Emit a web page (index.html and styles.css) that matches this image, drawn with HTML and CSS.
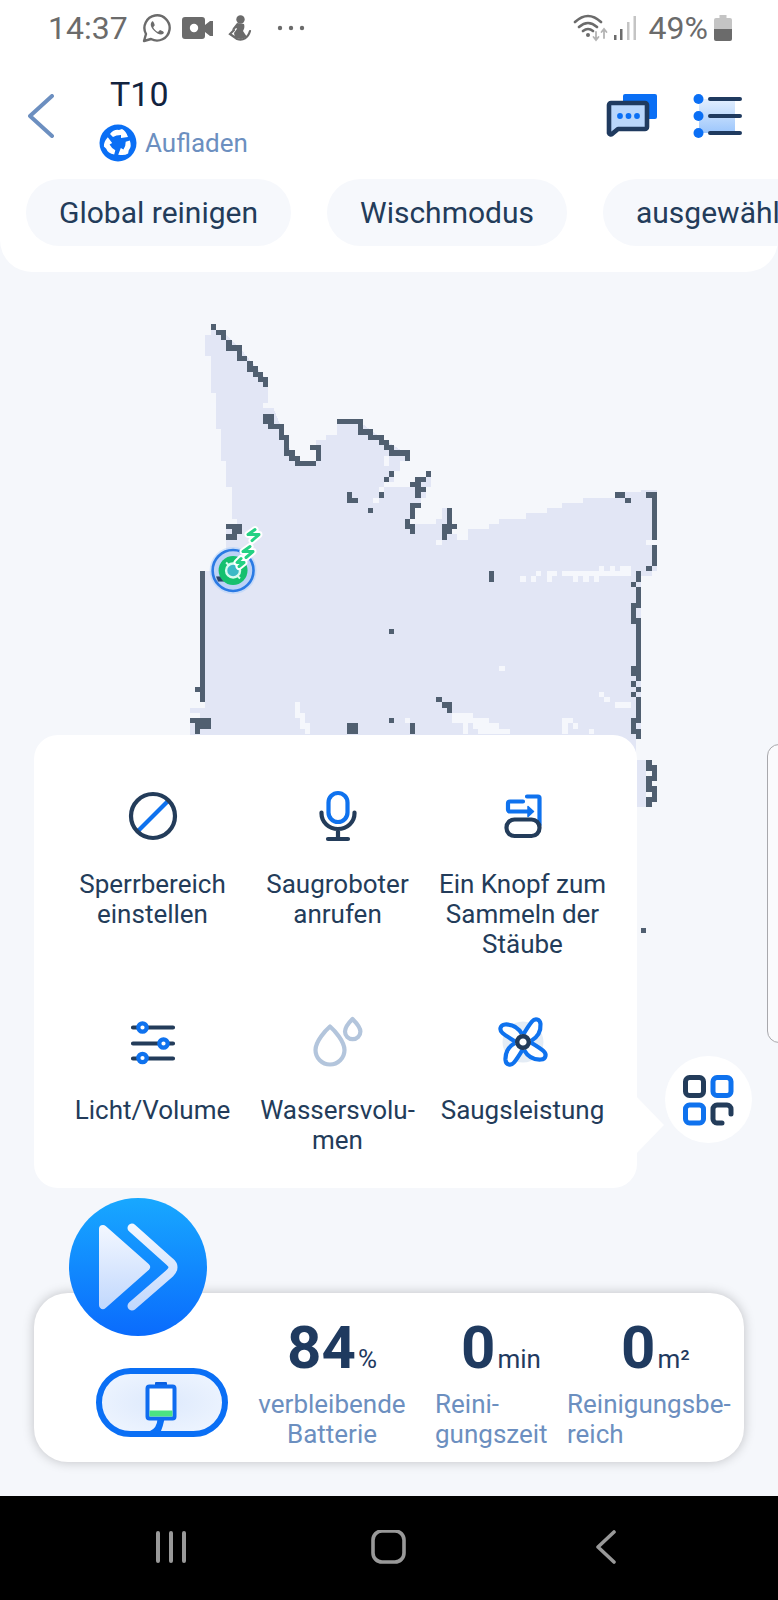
FILE: index.html
```html
<!DOCTYPE html>
<html lang="de">
  <head>
    <meta charset="UTF-8" />
    <meta name="viewport" content="width=device-width, initial-scale=1.0" />
    <title>T10</title>
    <link rel="stylesheet" href="styles.css">
  </head>
  <body>
    <header class="header">
      <div class="status">
        <span class="status-time">14:37</span>
        <svg class="status-wa" width="30" height="30" viewBox="0 0 30 30" fill="none" stroke="#6b6b6b" stroke-width="2.4">
          <path d="M2 28l2-7A12.6 12.6 0 1 1 9 26z" stroke-linejoin="round" />
          <path d="M10 8.500c-3 3 0 7 2.500 9.500s6.500 5 9 2.500c1-1.500 0-2-3.500-3.500l-2 2c-2-.8-4-3-4.800-4.800l1.600-2c-1-3-1.800-4.500-2.800-3.700z" fill="#6b6b6b" stroke="none" />
        </svg>
        <svg class="status-cam" width="32" height="24" viewBox="0 0 32 24">
          <path d="M3 1h17a3 3 0 0 1 3 3v5l5-4h3v15h-3l-5-4v4a3 3 0 0 1-3 3H3a3 3 0 0 1-3-3V4a3 3 0 0 1 3-3z" fill="#6b6b6b" />
          <circle cx="12" cy="12" r="4.200" fill="#fff" />
        </svg>
        <svg class="status-fig" width="24" height="26" viewBox="0 0 24 26" fill="#6b6b6b">
          <circle cx="12.500" cy="4.500" r="4.200" />
          <path d="M9 8l7 1c1 3 0 5-1 7l4 6-6 2-6-1-1-5c1-2 3-3 3-5l-5 2 1-2z" />
          <path d="M6 15l-4 4 7 5c6 2 11-1 13-8" fill="none" stroke="#6b6b6b" stroke-width="2.200" stroke-linecap="round" />
        </svg>
        <svg width="28" height="6" viewBox="0 0 28 6" fill="#6b6b6b">
          <circle cx="3" cy="3" r="2.200" /><circle cx="14" cy="3" r="2.200" /><circle cx="25" cy="3" r="2.200" />
        </svg>
        <span class="spacer"></span>
        <svg class="status-wifi" width="36" height="28" viewBox="0 0 36 28" fill="none" stroke="#6b6b6b" stroke-width="2.600" stroke-linecap="round">
          <path d="M2 8q13-12 26 0M6 13q9-8 18 0M10 17q5-4 10 0" />
          <circle cx="15" cy="21" r="2" fill="#6b6b6b" stroke="none" />
          <path d="M23 18v7M20.500 23l2.500 3 2.500-3M31 24v-8M28.500 18l2.500-3 2.500 3" stroke="#b4b4b4" stroke-width="1.800" />
        </svg>
        <svg class="status-signal" width="24" height="26" viewBox="0 0 24 26">
          <path d="M1 20h2.500v5H1zM7 14h2.500v11H7z" fill="#6b6b6b" />
          <path d="M14 7h2.500v18H14zM20.500 1H23v24h-2.500z" fill="#c4c4c4" />
        </svg>
        <span class="status-percent">49%</span>
        <svg width="19" height="28" viewBox="0 0 19 28">
          <path d="M5.500 1h7v3H16a2 2 0 0 1 2 2v10H0V6a2 2 0 0 1 2-2h3.500z" fill="#c4c4c4" />
          <path d="M0 15h18v10a2 2 0 0 1-2 2H2a2 2 0 0 1-2-2z" fill="#6b6b6b" />
        </svg>
      </div>

      <div class="titlebar">
        <button class="icon-button" aria-label="Zurück">
          <svg width="28" height="44" viewBox="0 0 28 44" fill="none" stroke="#6c8fc0" stroke-width="4" stroke-linecap="round" stroke-linejoin="round">
            <path d="M24 2L2 22l22 20" />
          </svg>
        </button>
        <div class="device">
          <h1>T10</h1>
          <p class="device-state">
            <svg width="38" height="38" viewBox="-19 -19 38 38">
              <circle r="18.500" fill="#0a6ff5" />
              <g fill="#fff">
                <path id="arr" d="M-8-9Q-4-14 1-13L4-14Q8-12 10-6L3-5 3-8Q-2-8-5-6z" />
                <use href="#arr" transform="rotate(120)" />
                <use href="#arr" transform="rotate(240)" />
              </g>
            </svg>
            Aufladen
          </p>
        </div>
        <button class="icon-button" aria-label="Nachrichten">
          <svg width="52" height="46" viewBox="0 0 52 46">
            <rect x="17" y="1" width="34" height="25" rx="2" fill="#0a6ff5" />
            <path d="M5 10h34a2 2 0 0 1 2 2v22a2 2 0 0 1-2 2H12l-6 5a2 2 0 0 1-3-1V12a2 2 0 0 1 2-2z" fill="#b9d6fb" stroke="#1f3a5f" stroke-width="4.600" stroke-linejoin="round" />
            <g fill="#0a6ff5"><circle cx="14" cy="23" r="2.900" /><circle cx="22.500" cy="23" r="2.900" /><circle cx="31" cy="23" r="2.900" /></g>
          </svg>
        </button>
        <button class="icon-button" aria-label="Einstellungen">
          <svg width="50" height="46" viewBox="0 0 50 46">
            <defs>
              <linearGradient id="listfill" x2="0" y2="1"><stop offset="0" stop-color="#e3effe" /><stop offset="1" stop-color="#9cc6fc" /></linearGradient>
            </defs>
            <rect x="6" y="6" width="36" height="34" fill="url(#listfill)" />
            <g fill="#0a6ff5"><circle cx="5.500" cy="6" r="5" /><circle cx="5.500" cy="23" r="5" /><circle cx="5.500" cy="40" r="5" /></g>
            <path d="M17 6h30M17 23h30M17 40h30" stroke="#1f3a5f" stroke-width="4" stroke-linecap="round" />
          </svg>
        </button>
      </div>

      <div class="chips">
        <button class="chip">Global reinigen</button>
        <button class="chip">Wischmodus</button>
        <button class="chip">ausgewähl</button>
      </div>
    </header>

    <main class="main">
      <!-- one unit = one map cell -->
      <svg class="map" viewBox="-6 -1 96 120" width="504" height="630" shape-rendering="crispEdges">
        <path fill="#e2e6f5" d="M0 1H2L6 5 11 11V15H10V16H12L14 21 16 26H20V22H22V21H24V19H29L33 22 38 25V26H36V28H35V30H34V31H38V30H39V29H41V28H42V31H41V33H40V35H39V38H43V37H44V35H46V40H49V39H53V38H55V37H60V36H64V35H67V34H71V33H79V32H82V31.500H85V47H84V48H82V79H81V83H83V92H81V98H-4V75H-2V74H-4V73H-1V47H1V44H3V38H5V37H4V31H3V27H2V20H1V13H0V6H-1V2H0z" />
        <path stroke="#f5f7fc" transform="translate(0 .5)" d="M59 48h1M61 48h1M62 47h1M64 47h2M64 48h1M67 47h13M74 46h1M76 46h1M78 46h2M69 48h1M71 48h1M73 48h1M55 65h1M74 70h1M75 71h1M77 72h3M46 74h4M46 75h7M48 76h1M50 76h5M48 77h1M51 77h6M67 75h2M67 76h1M67 77h1M69 76h1M72 77h1M83 41h2M43 41h1M47 40h2M16 72h1M16 73h1M16 74h2M17 75h1M17 76h2M18 77h1M37 75h1M33 25h1M33 26h1M33 30h1M32 31h1M31 33h1M-1 6h1M0 15h1M2 26h1M38 37h1" />
        <path stroke="#505f70" transform="translate(0 .5)" d="M0 0h1M1 1h2M2 2h1M3 3h1M3 4h3M5 5h1M5 6h2M7 7h1M7 8h2M8 9h2M9 10h2M10 11h1M10 17h2M10 18h2M11 19h3M13 20h1M13 21h2M14 24h2M15 25h2M16 26h4M19 23h2M24 18h5M28 20h3M30 21h3M32 22h2M33 23h2M34 24h4M37 25h1M34 28h1M33 29h1M32 32h1M26 32h1M26 33h2M30 35h1M41 28h1M39 29h2M38 30h2M39 31h2M39 32h1M38 34h2M37 37h1M37 38h2M38 39h1M44 38h3M44 39h2M44 40h1M3 38h3M4 39h2M3 40h2M-3 69h1M-4 75h4M-3 76h3M-3 77h1M1 48h2M34 58h1M43 71h1M44 72h2M45 73h1M34 75h1M26 76h2M26 77h2M77 32h2M79 33h1M83 32h2M83 46h1M80 49h1M80 68h1M81 69h1M80 70h1M82 115h1" />
        <path stroke="#505f70" transform="translate(.5 0)" d="M14 22v2M20 24v2M28 19v1M38 35v2M45 35v3M-2 47v25M38 76v2M84 33v8M84 42v4M81 47v2M81 50v4M80 53v4M81 56v12M80 65v2M81 71v5M81 77v2M80 75v3M53 47v2M83 83v2M84 84v3M83 86v3M84 88v3M83 90v2" />
        <!-- robot on its dock -->
        <g transform="translate(4.300 46.900) scale(.19)" shape-rendering="auto">
          <circle r="23.500" fill="#a9cdfb" opacity=".5" />
          <circle r="20.500" fill="#b9cff5" fill-opacity=".8" stroke="#2a7ae4" stroke-width="2.600" />
          <path d="M-17 6h8v5h-6z" fill="#2b4468" />
          <circle r="14.500" fill="#15c06e" />
          <circle r="7" fill="#3bb9c6" stroke="#d9fbef" stroke-width="2.400" />
          <path d="M-7-8l3 3M7 8l-3-3" stroke="#d9fbef" stroke-width="2" />
          <g fill="none" stroke-linecap="round" stroke-linejoin="round">
            <path d="M22-41L15-36 26-36 19-30M17-24L10-19 20-19 13-13M8-12L4-8 11-8 6-4" stroke="#fff" stroke-width="7" />
            <path d="M22-41L15-36 26-36 19-30M17-24L10-19 20-19 13-13M8-12L4-8 11-8 6-4" stroke="#23d183" stroke-width="3" />
          </g>
        </g>
      </svg>

      <div class="edge-handle"></div>

      <div class="tools">
        <div class="popup">
          <button class="tool">
            <svg width="56" height="56" viewBox="-28 -28 56 56" fill="none" stroke-width="4.200">
              <path d="M-15 15L15-15" stroke="#0f72ee" />
              <circle r="22" stroke="#233c5a" />
            </svg>
            <span>Sperrbereich einstellen</span>
          </button>
          <button class="tool">
            <svg width="56" height="56" viewBox="-28 -28 56 56" fill="none" stroke-width="4.200" stroke-linecap="round">
              <rect x="-9.500" y="-23" width="19" height="29" rx="9.500" stroke="#0f72ee" />
              <path d="M-16.500-3.500v1a16.500 15.500 0 0 0 33 0v-1M0 13v9M-10 23h20" stroke="#233c5a" />
            </svg>
            <span>Saugroboter anrufen</span>
          </button>
          <button class="tool">
            <svg width="56" height="56" viewBox="-28 -28 56 56" fill="none" stroke-width="4.200" stroke-linecap="round" stroke-linejoin="round">
              <path d="M4-19.500h11a1.500 1.500 0 0 1 1.500 1.500v27M0-14.500h-13a2 2 0 0 0-2 2v6a2 2 0 0 0 2 2H6" stroke="#0f72ee" />
              <path d="M5-9.500l5.500 5L5 .5z" fill="#0f72ee" stroke="#0f72ee" stroke-width="1.500" />
              <rect x="-16.500" y="3.500" width="33" height="16.500" rx="8" stroke="#233c5a" />
            </svg>
            <span>Ein Knopf zum Sammeln der Stäube</span>
          </button>
          <button class="tool">
            <svg width="56" height="56" viewBox="-28 -28 56 56">
              <path d="M-20-14.500h40M-20 1.500h40M-20 16.500h40" stroke="#233c5a" stroke-width="4.200" stroke-linecap="round" />
              <g fill="#fff" stroke="#0f72ee" stroke-width="4.200"><circle cx="-10.500" cy="-14.500" r="4.200" /><circle cx="10.500" cy="1.500" r="4.200" /><circle cx="-10.500" cy="16" r="4.200" /></g>
            </svg>
            <span>Licht/Volume</span>
          </button>
          <button class="tool">
            <svg width="56" height="56" viewBox="-28 -28 56 56" fill="none" stroke="#b3c5dc" stroke-width="4.200" stroke-linejoin="round">
              <path d="M-8-15.500C-12-12-22.500-1-22.500 8a14.500 14.500 0 0 0 29 0C6.500-1-4-12-8-15.500z" />
              <path d="M14.500-23C11-19.500 7-15 7-10.500a7.700 7.700 0 0 0 15.400 0C22.400-15 18-19.500 14.500-23z" />
            </svg>
            <span>Wassersvolu&shy;men</span>
          </button>
          <button class="tool">
            <svg width="56" height="56" viewBox="-28 -28 56 56">
              <circle r="20.500" fill="#e4ecf5" />
              <g fill="#fff" stroke="#0f72ee" stroke-width="4.200" stroke-linejoin="round">
                <path id="blade" d="M0-7C3-12 6-17 9-20.500C12-24 17-23 17.500-18C18-10 15-5 8-1" />
                <use href="#blade" transform="rotate(90)" />
                <use href="#blade" transform="rotate(180)" />
                <use href="#blade" transform="rotate(270)" />
              </g>
              <circle r="5.800" fill="#fff" stroke="#233c5a" stroke-width="4.400" />
            </svg>
            <span>Saugsleistung</span>
          </button>
        </div>
        <button class="more" aria-label="Mehr">
          <svg width="52" height="52" viewBox="0 0 52 52" fill="none" stroke-width="5" stroke-linecap="round">
            <rect x="2.500" y="3.500" width="18" height="18" rx="4" stroke="#233c5a" />
            <rect x="30" y="3.500" width="18" height="18" rx="4" stroke="#0f72ee" />
            <rect x="2.500" y="31" width="18" height="18" rx="4" stroke="#0f72ee" />
            <path d="M48 40v-5a4 4 0 0 0-4-4H34a4 4 0 0 0-4 4v10a4 4 0 0 0 4 4h5" stroke="#233c5a" />
          </svg>
        </button>
      </div>

      <section class="card">
        <button class="play" aria-label="Start">
          <svg width="138" height="138" viewBox="0 0 138 138">
            <defs>
              <linearGradient id="arrowfill" gradientUnits="userSpaceOnUse" x1="0" y1="26" x2="0" y2="112"><stop offset="0" stop-color="#f4f8ff" /><stop offset="1" stop-color="#c0d7fd" /></linearGradient>
            </defs>
            <path d="M34 31L77 69 34 107z" fill="url(#arrowfill)" stroke="url(#arrowfill)" stroke-width="8" stroke-linejoin="round" />
            <path d="M63 30L101 64Q107 69 101 75L63 108" fill="none" stroke="url(#arrowfill)" stroke-width="9" stroke-linecap="round" stroke-linejoin="round" />
          </svg>
        </button>
        <div class="dock">
          <button class="dock-button" aria-label="Zur Ladestation">
            <svg width="36" height="50" viewBox="0 0 36 50">
              <path d="M13.500 38H20.500Q19 45 17 50H6Q13 47 13.500 38z" fill="#0a6ff5" />
              <rect x="11" y="1" width="12" height="5" rx="1" fill="#0a5fe0" />
              <rect x="3.500" y="5.500" width="27" height="32" rx="2" fill="#fff" stroke="#0f6cf0" stroke-width="4" />
              <rect x="5.500" y="29.500" width="23" height="6" fill="#4be283" />
            </svg>
          </button>
        </div>
        <dl class="stats">
          <div class="stat stat-battery">
            <dd>84<small>%</small></dd>
            <dt>verbleibende Batterie</dt>
          </div>
          <div class="stat">
            <dd>0<small>min</small></dd>
            <dt>Reini&shy;gungszeit</dt>
          </div>
          <div class="stat">
            <dd>0<small>m²</small></dd>
            <dt>Reinigungsbe&shy;reich</dt>
          </div>
        </dl>
      </section>
    </main>

    <nav class="navbar">
      <button aria-label="Letzte Apps">
        <svg width="36" height="36" viewBox="-18 -18 36 36" stroke="#999" stroke-width="4" stroke-linecap="round">
          <path d="M-13-15v28M0-15v28M13-15v28" />
        </svg>
      </button>
      <button aria-label="Startseite">
        <svg width="36" height="36" viewBox="-18 -18 36 36" fill="none" stroke="#999" stroke-width="3.600">
          <rect x="-16" y="-17" width="31" height="31" rx="9" />
        </svg>
      </button>
      <button aria-label="Zurück">
        <svg width="36" height="36" viewBox="-18 -18 36 36" fill="none" stroke="#999" stroke-width="3.600" stroke-linecap="round" stroke-linejoin="round">
          <path d="M7-16L-9-1 7 14" />
        </svg>
      </button>
    </nav>
  </body>
</html>
```

FILE: styles.css
```css
* {
  box-sizing: border-box;
}
body {
  margin: 0;
  min-height: 100vh;
  display: flex;
  flex-direction: column;
  overflow-x: hidden;
  font-family: Roboto, "Liberation Sans", sans-serif;
  font-size: 26px;
  line-height: 30px;
  color: #233c5a;
  background-color: #f5f7fb;
}
button {
  border: none;
  padding: 0;
  background: none;
  font: inherit;
  color: inherit;
  cursor: pointer;
}
svg {
  display: block;
  flex-shrink: 0;
}

/* header */
.header {
  background-color: #fff;
  border-radius: 0 0 32px 32px;
  padding-bottom: 26px;
  overflow: hidden;
}
.status {
  display: flex;
  align-items: center;
  height: 56px;
  padding: 0 45px 0 48px;
  font-size: 32px;
  color: #6b6b6b;
}
.status-time {
  margin-right: 14px;
}
.status-wa {
  margin-right: 10px;
}
.status-cam {
  margin-right: 14px;
}
.status-fig {
  margin-right: 25px;
}
.spacer {
  flex: 1;
}
.status-wifi {
  margin-right: 4px;
}
.status-signal {
  margin-right: 12px;
}
.status-percent {
  margin-right: 6px;
}
.titlebar {
  display: flex;
  align-items: center;
  gap: 35px;
  height: 120px;
  padding: 0 35px 0 28px;
}
.device {
  flex: 1;
  padding-left: 8px;
}
.device h1 {
  margin: 0 0 6px;
  padding-left: 11px;
  font-size: 34px;
  font-weight: 400;
  line-height: 48px;
  color: #12233f;
}
.device-state {
  display: flex;
  align-items: center;
  gap: 8px;
  margin: 0;
  color: #6c8fc0;
}
.chips {
  display: flex;
  gap: 36px;
  padding: 3px 0 0 26px;
}
.chip {
  flex-shrink: 0;
  height: 67px;
  padding: 0 33px;
  border-radius: 34px;
  background-color: #f6f8fc;
  font-size: 30px;
  color: #233c5a;
}

/* map area */
.main {
  position: relative;
  flex: 1;
  display: flex;
  flex-direction: column;
  justify-content: flex-end;
  padding-bottom: 34px;
}
.map {
  position: absolute;
  top: 47px;
  left: 179px;
}
.edge-handle {
  position: absolute;
  top: 472px;
  right: -2px;
  width: 13px;
  height: 299px;
  border: 1px solid #a8a8ac;
  border-radius: 12px 0 0 12px;
  background-color: #fafafc;
}

/* tool popup */
.tools {
  position: relative;
  display: flex;
  align-items: flex-end;
  gap: 28px;
  padding: 0 26px 0 34px;
  margin-bottom: 105px;
}
.popup {
  position: relative;
  flex: 1;
  display: grid;
  grid-template-columns: repeat(3, 1fr);
  row-gap: 55px;
  padding: 53px 22px 33px 26px;
  border-radius: 24px;
  background-color: #fff;
}
.popup::after {
  content: "";
  position: absolute;
  right: -27px;
  bottom: 34px;
  border: 29px solid transparent;
  border-right: none;
  border-left: 28px solid #fff;
}
.tool {
  display: flex;
  flex-direction: column;
  align-items: center;
  gap: 25px;
  padding: 0 8px;
}
.more {
  display: flex;
  align-items: center;
  justify-content: center;
  width: 87px;
  height: 87px;
  margin-bottom: 45px;
  border-radius: 50%;
  background-color: #fff;
}

/* bottom card */
.card {
  position: relative;
  display: flex;
  margin: 0 34px;
  border-radius: 34px;
  background-color: #fff;
  box-shadow: 0 0 12px rgba(0, 0, 0, 0.22);
}
.play {
  position: absolute;
  top: -95px;
  left: 35px;
  border-radius: 50%;
  background: linear-gradient(#18a8ff, #0a6bfd);
}
.dock {
  display: flex;
  align-items: flex-end;
  width: 195px;
  padding: 0 0 25px 62px;
}
.dock-button {
  display: flex;
  align-items: flex-end;
  justify-content: center;
  width: 132px;
  height: 69px;
  border: 6px solid #0a6ff5;
  border-radius: 35px;
  background: radial-gradient(#dde9fc, #f0f6ff);
}
.stats {
  flex: 1;
  display: grid;
  grid-template-columns: 206fr 132fr 177fr;
  margin: 0;
  padding: 20px 0 13px;
}
.stat {
  display: flex;
  flex-direction: column;
  gap: 6px;
}
.stat dd {
  display: flex;
  align-items: baseline;
  justify-content: center;
  gap: 2px;
  margin: 0;
  font-size: 60px;
  font-weight: 700;
  line-height: 70px;
  color: #1f3a5f;
}
.stat small {
  font-size: 26px;
  font-weight: 400;
  line-height: 30px;
}
.stat dt {
  padding-right: 10px;
  color: #6c8fc0;
}
.stat-battery dt {
  padding: 0 24px;
  text-align: center;
}

/* system navigation */
.navbar {
  display: flex;
  height: 104px;
  padding: 0 62px;
  background-color: #000;
}
.navbar button {
  flex: 1;
  display: flex;
  align-items: center;
  justify-content: center;
}
```
